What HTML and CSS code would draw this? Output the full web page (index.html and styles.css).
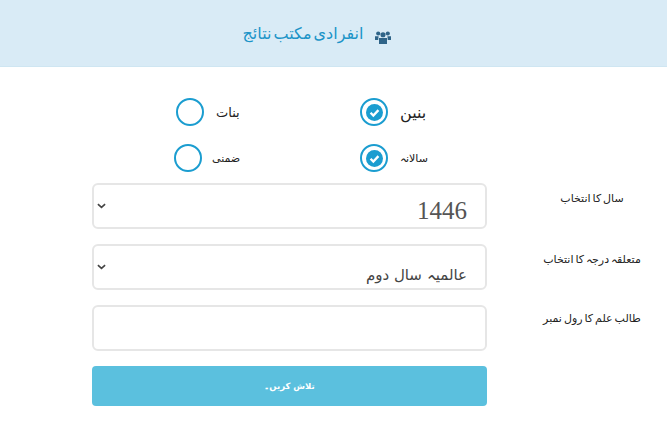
FILE: index.html
```html
<!DOCTYPE html>
<html lang="ur">
<head>
<meta charset="utf-8">
<title>انفرادی مکتب نتائج</title>
<link rel="stylesheet" href="styles.css">
</head>
<body>
<header class="banner">
  <h1 class="title">انفرادی مکتب نتائج</h1>
  <svg class="people" viewBox="0 0 20 16" width="16" height="13" aria-hidden="true">
    <circle cx="4" cy="3" r="2.6"/><circle cx="16" cy="3" r="2.6"/><circle cx="10" cy="4.5" r="3.2"/>
    <path d="M0 6.5h4.5L4 11H0zM20 6.5h-4.5L16 11h4zM5 8.5h10v7.5H5z"/>
  </svg>
</header>
<main class="page">
  <section class="choices">
    <div class="choice choice-b">
      <span class="radio"></span>
      <span class="choice-text">بنات</span>
    </div>
    <div class="choice">
      <span class="radio"><svg viewBox="0 0 16 16" width="17" height="17"><circle cx="8" cy="8" r="8" fill="#1b9dd0"/><path d="M4.3 8.2l2.6 2.6 4.8-5" fill="none" stroke="#fff" stroke-width="2.2"/></svg></span>
      <span class="choice-text text-large">بنین</span>
    </div>
    <div class="choice choice-c">
      <span class="radio"></span>
      <span class="choice-text text-small">ضمنی</span>
    </div>
    <div class="choice">
      <span class="radio"><svg viewBox="0 0 16 16" width="17" height="17"><circle cx="8" cy="8" r="8" fill="#1b9dd0"/><path d="M4.3 8.2l2.6 2.6 4.8-5" fill="none" stroke="#fff" stroke-width="2.2"/></svg></span>
      <span class="choice-text text-small">سالانہ</span>
    </div>
  </section>
  <section class="form">
    <div class="field">
      <div class="control">
        <svg class="chevron" viewBox="0 0 10 6" width="9" height="6"><path d="M1 1l4 3.6L9 1" fill="none" stroke="#444" stroke-width="1.8"/></svg>
        <span class="value number">1446</span>
      </div>
      <div class="label">سال کا انتخاب</div>
    </div>
    <div class="field">
      <div class="control">
        <svg class="chevron" viewBox="0 0 10 6" width="9" height="6"><path d="M1 1l4 3.6L9 1" fill="none" stroke="#444" stroke-width="1.8"/></svg>
        <span class="value">عالمیہ سال دوم</span>
      </div>
      <div class="label">متعلقہ درجہ کا انتخاب</div>
    </div>
    <div class="field">
      <div class="control"></div>
      <div class="label label-top">طالب علم کا رول نمبر</div>
    </div>
    <div class="field field-button">
      <button class="submit" type="button">تلاش کریں۔</button>
    </div>
  </section>
</main>
</body>
</html>
```
FILE: styles.css
```css
* { box-sizing: border-box; }
html, body { margin: 0; padding: 0; background: #fff; }
body { width: 667px; height: 435px; overflow: hidden; font-family: "DejaVu Sans", "Noto Sans", sans-serif; color: #222; }

.banner {
  height: 67px;
  background: #d9ebf6;
  border-bottom: 1px solid #cfe6f2;
  display: flex;
  align-items: center;
  justify-content: center;
  gap: 12px;
  padding: 0 33px 0 0;
}
.people { fill: #2f6488; margin-top: 8px; }
.title {
  margin: 0;
  font-size: 16px;
  font-weight: 400;
  word-spacing: -3px;
  color: #1b94c8;
  direction: rtl;
}

.page { padding: 22px 0 0 92px; }

.choices {
  display: grid;
  grid-template-columns: 184px 184px;
  grid-auto-rows: 46px;
  width: 368px;
  margin-left: 84px;
  margin-bottom: 2px;
}
.choice { display: flex; align-items: center; gap: 12px; }
.choice-c { margin-left: -2px; gap: 10px; }
.radio {
  width: 28px;
  height: 28px;
  flex: none;
  border: 2px solid #1b9dd0;
  border-radius: 50%;
  display: flex;
  align-items: center;
  justify-content: center;
  background: #fff;
}
.choice-text { font-size: 13px; direction: rtl; color: #222; }
.text-large { font-size: 16px; }
.text-small { font-size: 11px; }

.form { display: flex; flex-direction: column; gap: 15px; }
.field { display: flex; align-items: stretch; height: 46px; }
.field-button { height: 40px; }
.control {
  width: 395px;
  height: 46px;
  border: 2px solid #e6e6e6;
  border-radius: 6px;
  display: flex;
  align-items: center;
  justify-content: space-between;
  padding: 0 18px 0 3px;
  background: #fff;
}
.value { font-size: 15px; color: #444; direction: rtl; padding-top: 16px; }
.number { font-family: "Liberation Serif", serif; font-size: 25px; color: #555; padding-top: 9px; }
.label {
  width: 180px;
  text-align: center;
  font-size: 11px;
  word-spacing: -1.5px;
  direction: rtl;
  color: #222;
  padding: 9px 0 0 30px;
  white-space: nowrap;
}
.label-top { padding-top: 7px; }
.submit {
  width: 395px;
  height: 40px;
  border: 0;
  border-radius: 4px;
  background: #5bc0de;
  color: #fff;
  font-family: "DejaVu Sans", sans-serif;
  font-size: 8.5px;
  font-weight: 700;
  padding: 0;
}
```
